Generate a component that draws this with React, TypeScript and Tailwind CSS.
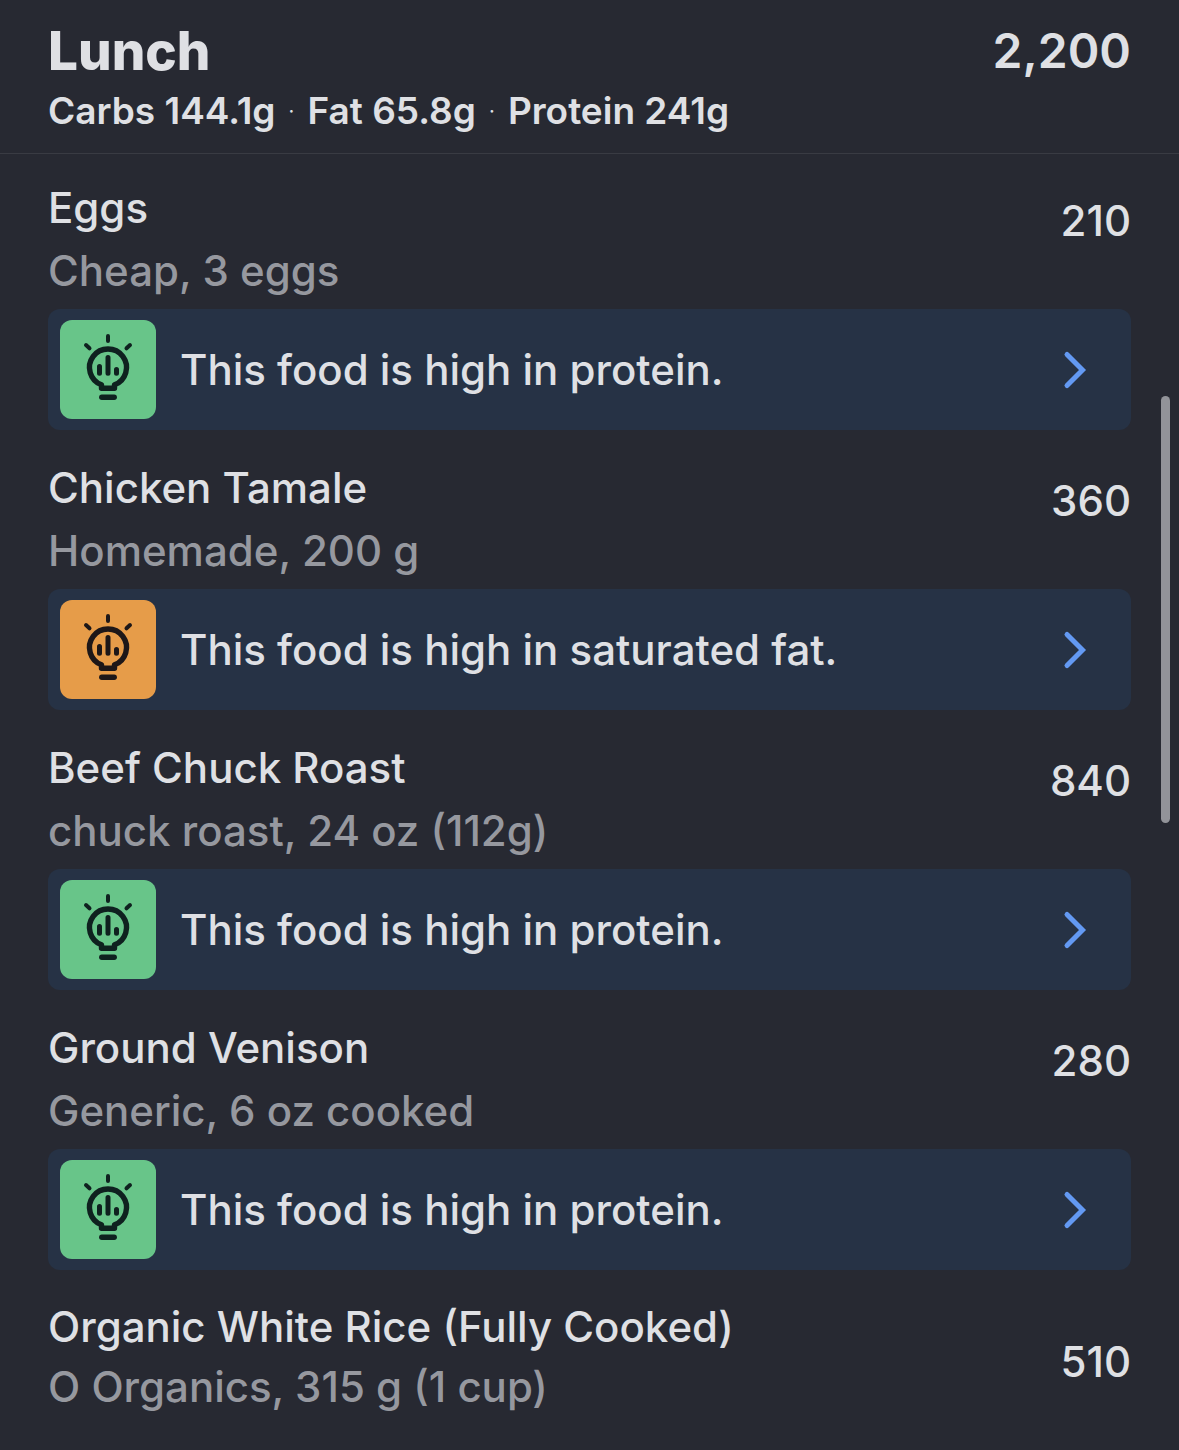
type Food = {
  id: number;
  name: string;
  detail: string;
  calories: number;
  insight?: string;
  tone?: 'good' | 'warning';
};

const macros = ['Carbs 144.1g', 'Fat 65.8g', 'Protein 241g'];

const foods: Food[] = [
  {
    id: 1,
    name: 'Eggs',
    detail: 'Cheap, 3 eggs',
    calories: 210,
    insight: 'This food is high in protein.',
    tone: 'good',
  },
  {
    id: 2,
    name: 'Chicken Tamale',
    detail: 'Homemade, 200 g',
    calories: 360,
    insight: 'This food is high in saturated fat.',
    tone: 'warning',
  },
  {
    id: 3,
    name: 'Beef Chuck Roast',
    detail: 'chuck roast, 24 oz (112g)',
    calories: 840,
    insight: 'This food is high in protein.',
    tone: 'good',
  },
  {
    id: 4,
    name: 'Ground Venison',
    detail: 'Generic, 6 oz cooked',
    calories: 280,
    insight: 'This food is high in protein.',
    tone: 'good',
  },
  {
    id: 5,
    name: 'Organic White Rice (Fully Cooked)',
    detail: 'O Organics, 315 g (1 cup)',
    calories: 510,
  },
];

function BulbIcon() {
  return (
    <svg
      className="w-full h-full"
      viewBox="0 0 96 99"
      fill="none"
      stroke="currentColor"
      strokeWidth="5.4"
      strokeLinecap="round"
      strokeLinejoin="round"
      aria-hidden="true"
    >
      <path d="M41.5 64.8A18.5 18.5 0 1 1 54.5 64.8V68.3H41.5Z" />
      <path d="M41.8 77.3H54.2" />
      <path d="M39.5 46.4V53.2M48 37.6V53.2M56.5 49.6V53.2" strokeWidth="5" />
      <path d="M48 16V21M26 25L29.5 28.3M70 25L66.5 28.3" strokeWidth="4" />
    </svg>
  );
}

function Insight({ text, tone }: { text: string; tone?: 'good' | 'warning' }) {
  return (
    <button
      type="button"
      className="mt-[7px] w-full flex items-center gap-6 rounded-xl bg-[#263245] py-[11px] pl-3 pr-11 text-left"
    >
      <span
        className={`w-24 h-[99px] shrink-0 rounded-xl ${
          tone === 'warning' ? 'bg-[#e69c49] text-[#1d1718]' : 'bg-[#68c589] text-[#0f211f]'
        }`}
      >
        <BulbIcon />
      </span>
      <span className="flex-1 text-[42px] leading-[63px]">{text}</span>
      <svg
        className="w-6 h-10 shrink-0 text-[#6399f2]"
        viewBox="0 0 24 40"
        fill="none"
        stroke="currentColor"
        strokeWidth="5"
        strokeLinecap="round"
        aria-hidden="true"
      >
        <path d="M4 4.5L19.5 20L4 35.5" />
      </svg>
    </button>
  );
}

function FoodRow({ food }: { food: Food }) {
  if (!food.insight) {
    return (
      <li className="flex items-center justify-between pt-[23px] pb-[33px]">
        <div>
          <h2 className="leading-[60px]">{food.name}</h2>
          <p className="leading-[60px] text-[#96989f]">{food.detail}</p>
        </div>
        <span className="pt-[10px] leading-[60px]">{food.calories}</span>
      </li>
    );
  }

  return (
    <li className="pt-[22px] pb-1">
      <div className="flex items-start justify-between">
        <div>
          <h2 className="leading-[63px]">{food.name}</h2>
          <p className="leading-[63px] text-[#96989f]">{food.detail}</p>
        </div>
        <span className="pt-[13px] leading-[63px]">{food.calories}</span>
      </div>
      <Insight text={food.insight} tone={food.tone} />
    </li>
  );
}

export default function App() {
  return (
    <main className="relative min-h-screen bg-[#272932] font-['Inter',sans-serif] font-medium text-[#dfe0e4]">
      {/* Meal summary */}
      <header className="border-b border-[#393b43] px-12 pt-[18px] pb-4 font-semibold">
        <div className="flex items-center justify-between">
          <h1 className="text-[53px] leading-[66px] font-extrabold">Lunch</h1>
          <span className="text-[48px] leading-[66px]">2,200</span>
        </div>
        <p className="flex items-center text-[37px] leading-[53px]">
          {macros.map((macro, i) => (
            <span key={macro} className="flex items-center">
              {i > 0 && <span className="w-8 text-center text-xl font-normal">·</span>}
              {macro}
            </span>
          ))}
        </p>
      </header>

      {/* Logged foods */}
      <ul className="px-12 text-[42px]">
        {foods.map((food) => (
          <FoodRow key={food.id} food={food} />
        ))}
      </ul>

      {/* Scroll indicator */}
      <div className="absolute right-[9px] top-[396px] h-[427px] w-[9px] rounded-full bg-[#929399]" />
    </main>
  );
}
